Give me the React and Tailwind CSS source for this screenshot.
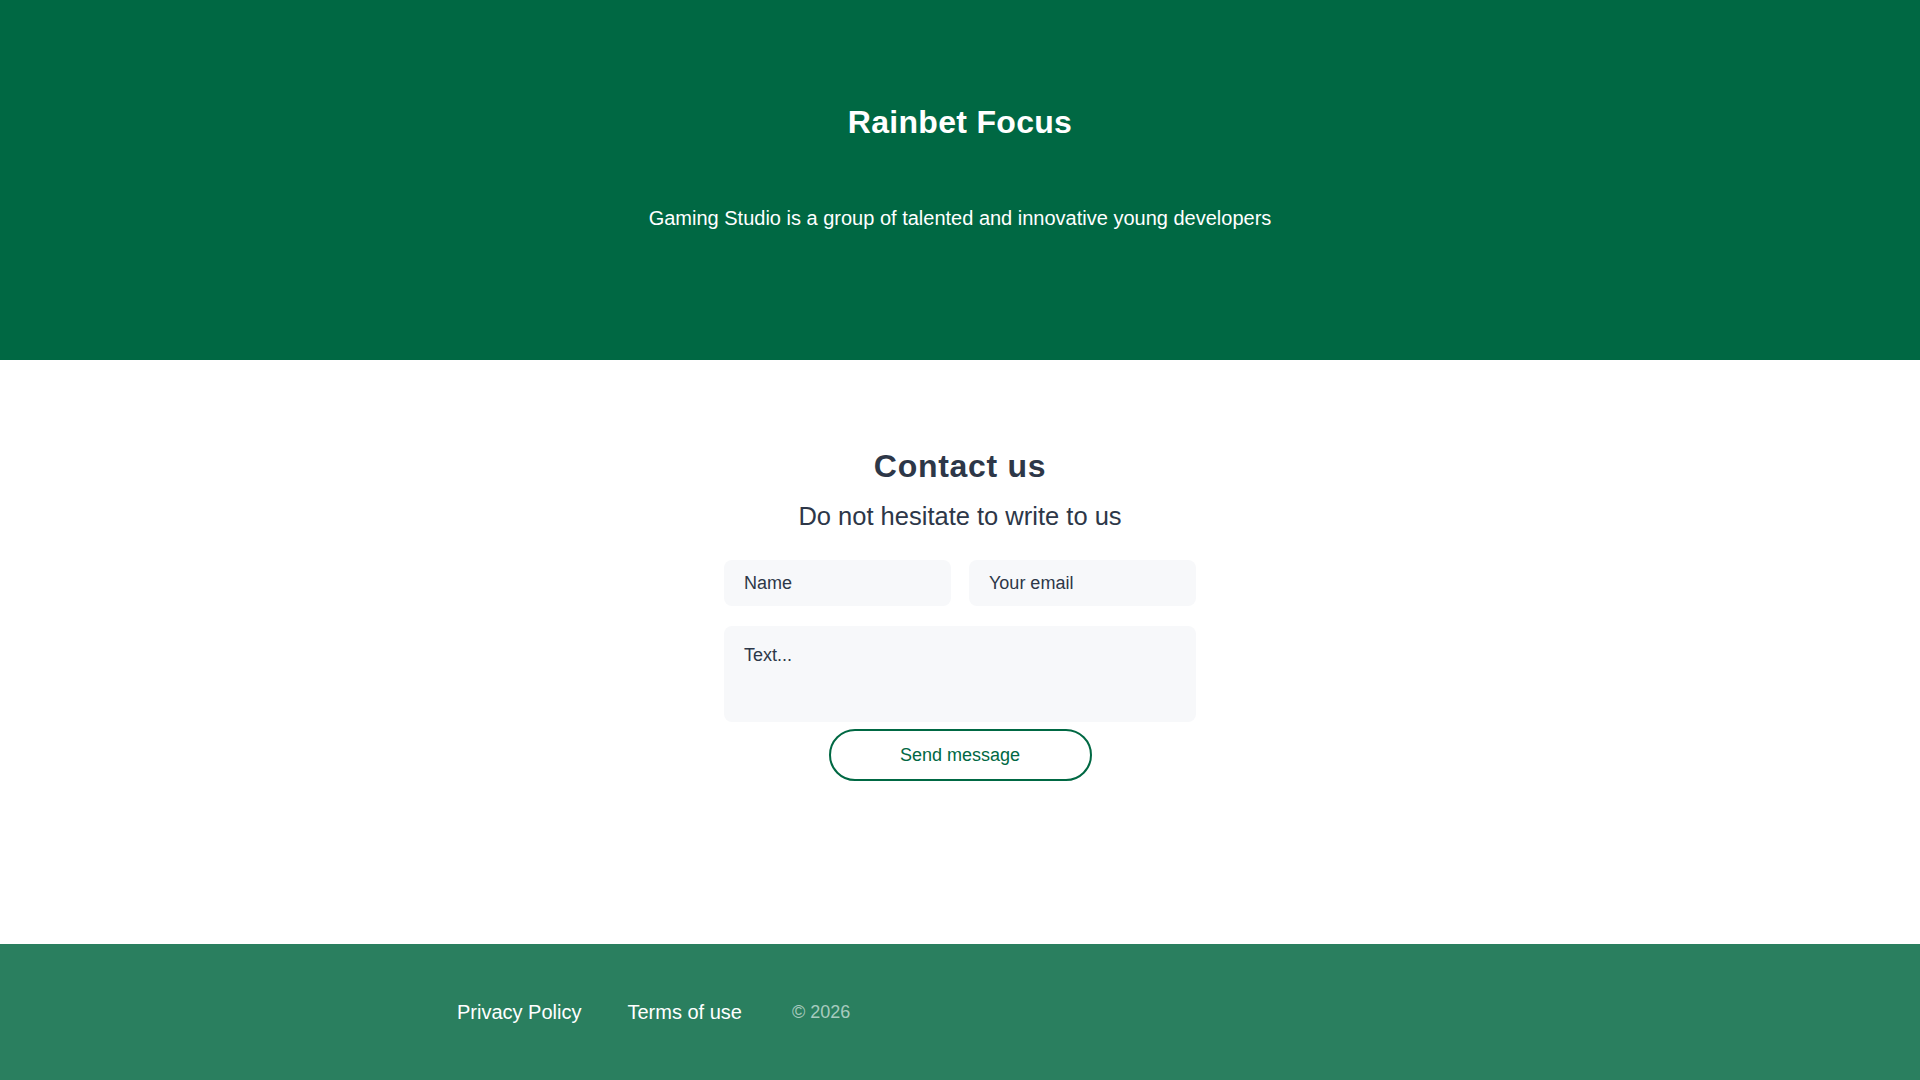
export default function App() {
  return (
    <div className="min-h-screen flex flex-col bg-white" style={{ fontFamily: '"Liberation Sans", Arial, sans-serif' }}>
      <header className="h-[360px] bg-[#006843] flex flex-col items-center pt-[102px] text-white">
        <h1 className="text-[32px] leading-[40px] font-bold tracking-[0.3px]">Rainbet Focus</h1>
        <p className="mt-[62px] text-[20px] leading-[28px]">
          Gaming Studio is a group of talented and innovative young developers
        </p>
      </header>

      <main className="h-[584px] flex flex-col items-center pt-[86px] text-[#2d3748]">
        <h2 className="text-[32px] leading-[40px] font-bold tracking-[0.7px]">Contact us</h2>
        <p className="mt-[14px] text-[25.5px] leading-[32px]">Do not hesitate to write to us</p>
        <form className="mt-[28px] w-[472px] flex flex-col" onSubmit={(e) => e.preventDefault()}>
          <div className="flex gap-[18px]">
            <input
              type="text"
              placeholder="Name"
              className="w-[227px] h-[46px] rounded-[8px] bg-[#f7f8fa] px-5 text-[18px] text-[#2d3748] placeholder:text-[#2d3748] outline-none"
            />
            <input
              type="email"
              placeholder="Your email"
              className="w-[227px] h-[46px] rounded-[8px] bg-[#f7f8fa] px-5 text-[18px] text-[#2d3748] placeholder:text-[#2d3748] outline-none"
            />
          </div>
          <textarea
            placeholder="Text..."
            className="mt-5 h-[96px] resize-none rounded-[8px] bg-[#f7f8fa] px-5 pt-[17px] text-[18px] leading-[24px] text-[#2d3748] placeholder:text-[#2d3748] outline-none"
          />
          <button
            type="submit"
            className="mt-[7px] self-center w-[263px] h-[52px] rounded-full border-2 border-[#006843] text-[#006843] text-[18px]"
          >
            Send message
          </button>
        </form>
      </main>

      <footer className="h-[136px] bg-[#2a7f5f] flex items-center">
        <div className="w-[1006px] mx-auto flex items-center">
          <a href="#" className="text-white text-[20px]">Privacy Policy</a>
          <a href="#" className="ml-[46px] text-white text-[20px]">Terms of use</a>
          <span className="ml-[50px] text-white/60 text-[18px]">© 2026</span>
        </div>
      </footer>
    </div>
  );
}
